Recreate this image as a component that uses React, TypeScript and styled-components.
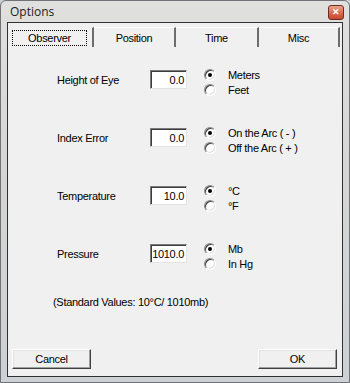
import React from 'react';
import styled, { createGlobalStyle } from 'styled-components';

const GlobalStyle = createGlobalStyle`
  html, body {
    margin: 0;
    padding: 0;
    background: #cfd3d8;
  }
  body {
    font-family: 'Liberation Sans', Arial, sans-serif;
  }
`;

const Frame = styled.div`
  width: 350px;
  height: 383px;
  box-sizing: border-box;
  display: flex;
  flex-direction: column;
  background: linear-gradient(180deg, #e0e0df 0%, #d6d6d4 40%, #cdd0d4 100%);
  border: 1px solid #6f7378;
  border-radius: 6px 6px 0 0;
  overflow: hidden;
`;

const TitleBar = styled.div`
  height: 21px;
  display: flex;
  align-items: center;
  padding: 0 5px 0 9px;
`;

const Title = styled.span`
  flex: 1;
  font-family: 'Open Sans', 'Noto Sans', sans-serif;
  font-size: 12px;
  color: #1c1c1c;
`;

const CloseButton = styled.div`
  width: 14px;
  height: 13px;
  margin-top: 2px;
  border: 1px solid #6b2c22;
  border-radius: 3px;
  background: linear-gradient(180deg, #eca58c 0%, #dc6c50 50%, #c8462b 100%);
  display: flex;
  align-items: center;
  justify-content: center;
  color: #fff;
  font-size: 9px;
  font-weight: bold;
  line-height: 1;
`;

const Client = styled.div`
  margin: 0 6px 5px 6px;
  flex: 1;
  border: 1px solid #2f3133;
  background: #f0f0f0;
  display: flex;
  flex-direction: column;
  font-size: 11px;
  letter-spacing: -0.3px;
  color: #000;
`;

const TabRow = styled.div`
  display: flex;
  margin: 4px 0 0 3px;
  height: 20px;
`;

const Tab = styled.div<{ $w: number; $active?: boolean }>`
  width: ${(p) => p.$w}px;
  box-sizing: border-box;
  height: 20px;
  display: flex;
  align-items: center;
  justify-content: center;
  border-right: 2px solid #6d6d6d;
  border-top: 1px solid ${(p) => (p.$active ? '#f0f0f0' : '#ffffff')};
  background: #f0f0f0;
`;

const FocusBox = styled.div`
  width: 75px;
  height: 16px;
  margin-left: -4px;
  box-sizing: border-box;
  border: 1px dotted #000;
  display: flex;
  align-items: center;
  justify-content: center;
`;

const Form = styled.div`
  display: flex;
  flex-direction: column;
  gap: 28px;
  margin-top: 20px;
  padding-left: 49px;
`;

const Row = styled.div`
  height: 30px;
  display: grid;
  grid-template-columns: 93px 37px 17px auto;
  align-items: start;
`;

const Label = styled.div`
  height: 19px;
  margin-top: 3px;
  display: flex;
  align-items: center;
`;

const Field = styled.div`
  grid-column: 2;
  height: 19px;
  margin-top: 3px;
  box-sizing: border-box;
  background: #fff;
  border-top: 1px solid #7a7a7a;
  border-left: 1px solid #7a7a7a;
  border-right: 1px solid #e3e3e3;
  border-bottom: 1px solid #e3e3e3;
  box-shadow: inset 1px 1px 0 #3c3c3c;
  display: flex;
  align-items: center;
  justify-content: flex-end;
  padding-right: 2px;
  white-space: nowrap;
`;

const RadioGroup = styled.div`
  grid-column: 4;
  display: flex;
  flex-direction: column;
`;

const RadioItem = styled.div`
  height: 15px;
  display: flex;
  align-items: center;
`;

const RadioDot = styled.span<{ $checked?: boolean }>`
  width: 12px;
  height: 12px;
  box-sizing: border-box;
  border-radius: 50%;
  border: 1px solid;
  border-color: #8a8a8a #ffffff #ffffff #8a8a8a;
  box-shadow: inset 1px 1px 0 #404040, inset -1px -1px 0 #dcdcdc;
  background: #fff;
  margin-right: 12px;
  display: flex;
  align-items: center;
  justify-content: center;
  &::after {
    content: '';
    width: 4px;
    height: 4px;
    border-radius: 50%;
    background: ${(p) => (p.$checked ? '#000' : 'transparent')};
  }
`;

const Note = styled.div`
  margin: 25px 0 0 45px;
`;

const Footer = styled.div`
  margin-top: auto;
  display: flex;
  justify-content: space-between;
  padding: 0 5px 7px 4px;
`;

const Button = styled.div`
  width: 79px;
  height: 20px;
  box-sizing: border-box;
  background: #f0f0f0;
  border-top: 1px solid #ffffff;
  border-left: 1px solid #ffffff;
  border-right: 1px solid #404040;
  border-bottom: 1px solid #404040;
  box-shadow: inset -1px -1px 0 #a0a0a0, inset 1px 1px 0 #e3e3e3;
  display: flex;
  align-items: center;
  justify-content: center;
`;

type Unit = { label: string; checked?: boolean };

const rows: { label: string; value: string; units: Unit[] }[] = [
  { label: 'Height of Eye', value: '0.0', units: [{ label: 'Meters', checked: true }, { label: 'Feet' }] },
  {
    label: 'Index Error',
    value: '0.0',
    units: [{ label: 'On the Arc ( - )', checked: true }, { label: 'Off the Arc ( + )' }],
  },
  { label: 'Temperature', value: '10.0', units: [{ label: '°C', checked: true }, { label: '°F' }] },
  { label: 'Pressure', value: '1010.0', units: [{ label: 'Mb', checked: true }, { label: 'In Hg' }] },
];

const App = () => {
  return (
    <Frame>
      <GlobalStyle />
      <TitleBar>
        <Title>Options</Title>
        <CloseButton>✕</CloseButton>
      </TitleBar>
      <Client>
        <TabRow>
          <Tab $w={83} $active>
            <FocusBox>Observer</FocusBox>
          </Tab>
          <Tab $w={82}>Position</Tab>
          <Tab $w={83}>Time</Tab>
          <Tab $w={81}>Misc</Tab>
        </TabRow>
        <Form>
          {rows.map((r) => (
            <Row key={r.label}>
              <Label>{r.label}</Label>
              <Field>{r.value}</Field>
              <RadioGroup>
                {r.units.map((u) => (
                  <RadioItem key={u.label}>
                    <RadioDot $checked={u.checked} />
                    {u.label}
                  </RadioItem>
                ))}
              </RadioGroup>
            </Row>
          ))}
        </Form>
        <Note>(Standard Values: 10°C/ 1010mb)</Note>
        <Footer>
          <Button>Cancel</Button>
          <Button>OK</Button>
        </Footer>
      </Client>
    </Frame>
  );
};

export default App;
